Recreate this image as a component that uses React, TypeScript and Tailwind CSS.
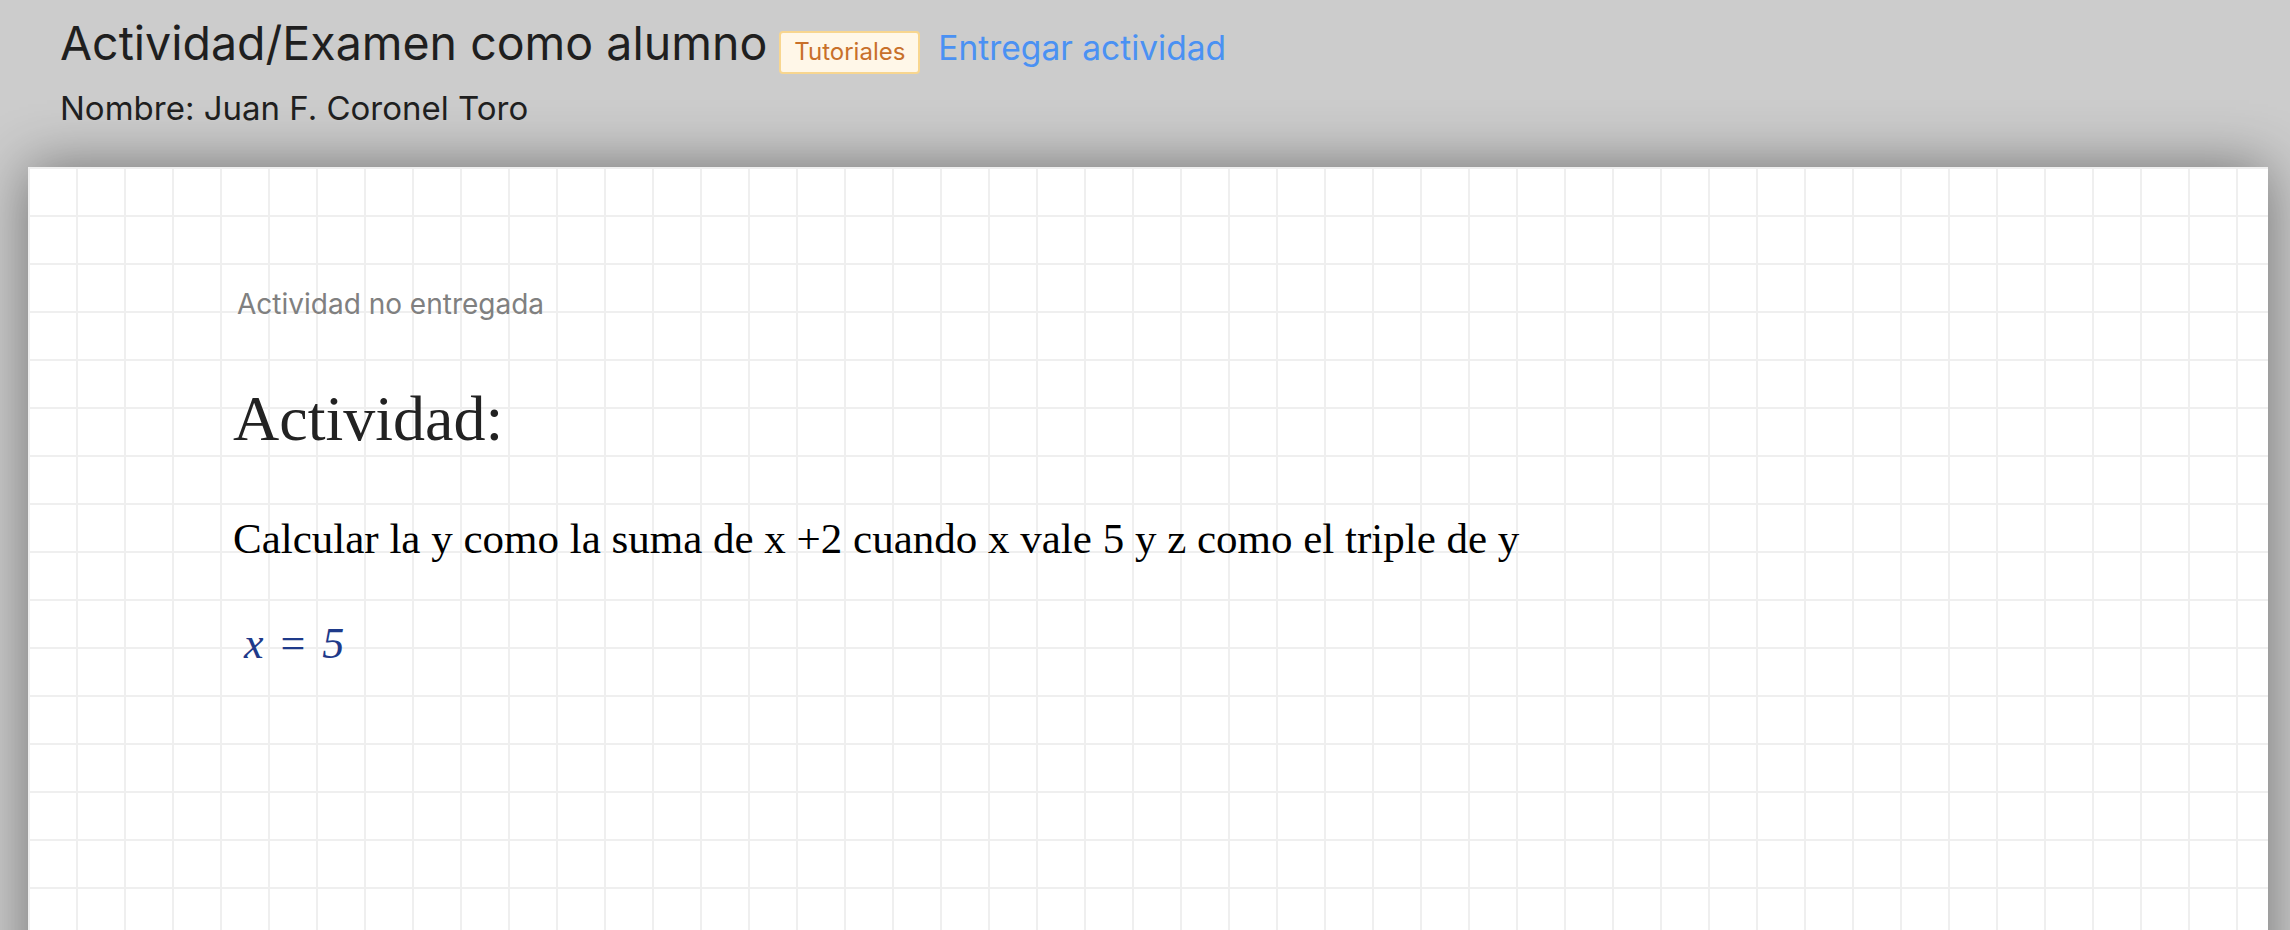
import React from 'react';

const sans = "font-['Inter','Noto_Sans',sans-serif]";
const serif = "font-['Liberation_Serif','Times_New_Roman',serif]";

export default function App() {
  return (
    <div className={`h-[930px] overflow-hidden bg-[#cccccc] ${sans}`}>
      {/* Header */}
      <header className="pl-[60px] pt-[16px]">
        <div className="flex items-baseline">
          <h1 className="text-[46.5px] leading-[1.2] text-[#1f1f1f]">
            Actividad/Examen como alumno
          </h1>
          <span className="ml-[12px] rounded-[4px] border-2 border-[#f8d68f] bg-[#fff7e8] px-[13px] py-[5px] text-[24px] leading-[1.2] text-[#c8702a]">
            Tutoriales
          </span>
          <a href="#" className="ml-[18px] text-[33.5px] leading-[1.2] text-[#4a91f3]">
            Entregar actividad
          </a>
        </div>
        <p className="mt-[15px] text-[33px] leading-[1.2] text-[#1f1f1f]">
          Nombre: Juan F. Coronel Toro
        </p>
      </header>

      {/* Hoja cuadriculada */}
      <main className="ml-[28px] mr-[22px] mt-[39px] h-[900px] bg-white bg-[linear-gradient(to_right,#efefef_2px,transparent_2px),linear-gradient(to_bottom,#efefef_2px,transparent_2px)] bg-[size:48px_48px] pl-[205px] pt-[116px] shadow-[0_0_55px_rgba(0,0,0,0.45)]">
        <p className={`${sans} ml-[4px] text-[28px] leading-[1.5] text-[#808080]`}>Actividad no entregada</p>
        <h2 className={`${serif} mt-[56px] text-[64px] leading-[1.2] text-[#222222]`}>Actividad:</h2>
        <p className={`${serif} mt-[49px] text-[43px] leading-[1.5] text-black`}>
          Calcular la y como la suma de x +2 cuando x vale 5 y z como el triple de y
        </p>
        <p className={`${serif} ml-[11px] mt-[39px] text-[44px] leading-[1.5] text-[#1e3a8a]`}>
          <span className="italic">x</span>
          <span className="mx-[17px]">=</span>
          <span className="italic">5</span>
        </p>
      </main>
    </div>
  );
}
